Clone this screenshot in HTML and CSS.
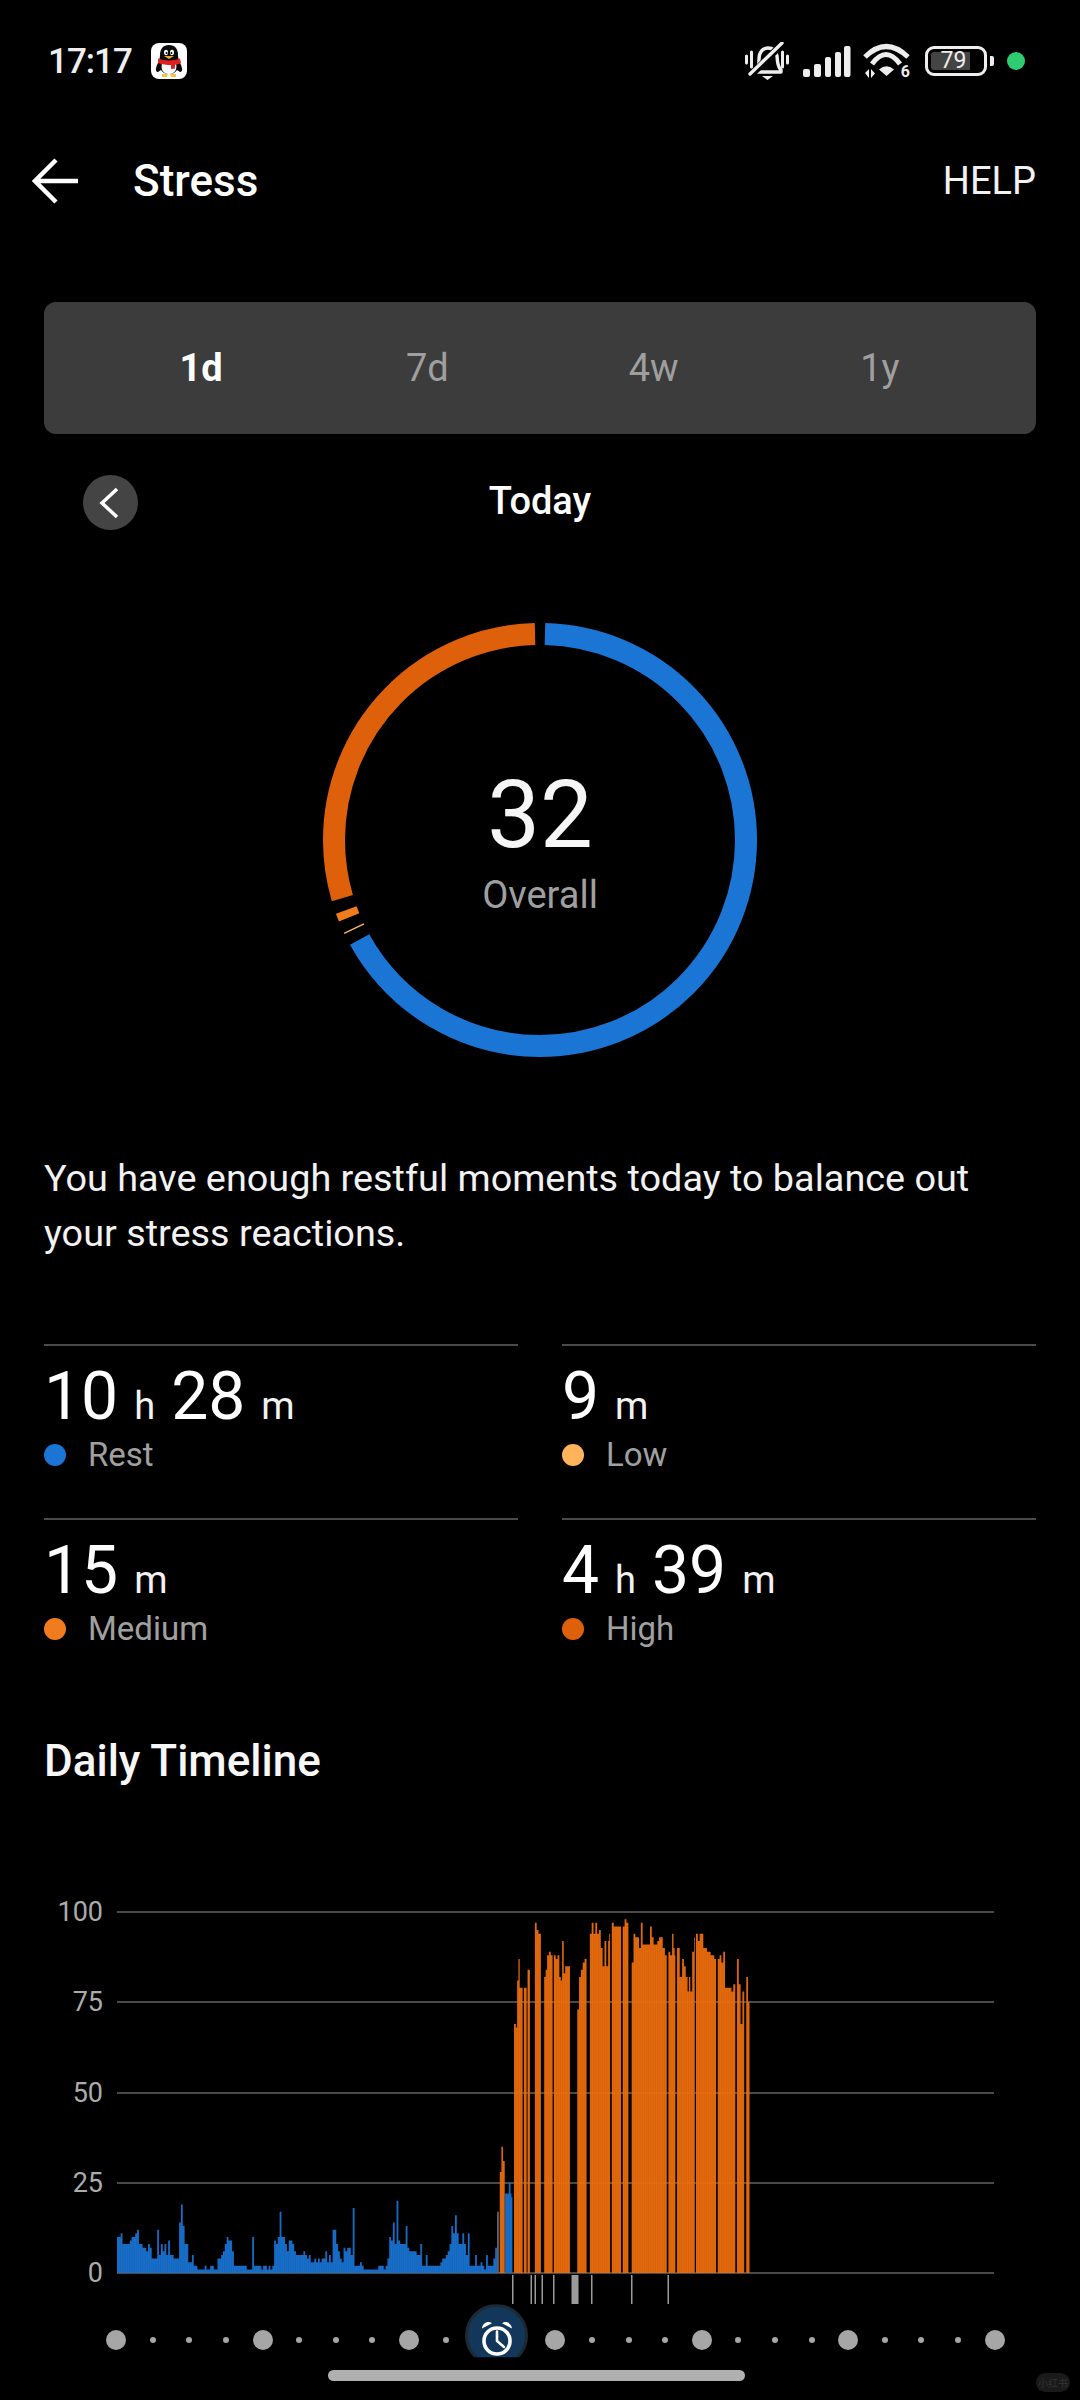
FILE: index.html
```html
<!DOCTYPE html>
<html lang="en">
<head>
<meta charset="utf-8">
<title>Stress</title>
<link rel="stylesheet" href="styles.css">
</head>
<body>
<div class="screen">
  <div class="status">
    <div class="status-left">
      <span class="clock">17:17</span>
      <svg class="qq" viewBox="0 0 36 36">
        <rect width="36" height="36" rx="8" fill="#fff"/>
        <path d="M18 2c-6 0-9 4-9 10 0 3-1 6-3 10-2 5-1 7 1 7l3-2c2 3 5 4 8 4s6-1 8-4l3 2c2 0 3-2 1-7-2-4-3-7-3-10 0-6-3-10-9-10z" fill="#0a0a0a"/>
        <path d="M11.500 19c-2 5-1 12 6.500 12s8.500-7 6.500-12z" fill="#fff"/>
        <ellipse cx="15" cy="9.500" rx="2" ry="2.800" fill="#fff"/>
        <ellipse cx="21" cy="9.500" rx="2" ry="2.800" fill="#fff"/>
        <circle cx="15.500" cy="10" r="1" fill="#000"/>
        <circle cx="20.500" cy="10" r="1" fill="#000"/>
        <path d="M13 13h10l-5 3z" fill="#f5a623"/>
        <path d="M7 15.500c6 2.500 16 2.500 22 0l1 4.500c-2 1-4 1.500-6 1.700v3.800l-4 .5v-4c-4 0-9-.5-13-2z" fill="#e02020"/>
        <path d="M11 31h6l-1 3h-5zM19 31h6v3h-5z" fill="#f5c542"/>
      </svg>
    </div>
    <div class="status-right">
      <svg class="ic-bell" viewBox="0 0 44 38" fill="none" stroke="#eee" stroke-linecap="round" stroke-linejoin="round">
        <path d="M1.500 14v7M6.500 10v15M37.500 10v15M42.500 14v7" stroke-width="3"/>
        <path d="M12 28c2-3 2-6 2-11 0-7 4-11 9-11 5 0 8 3 9 8 .6 5 0 10 4 14v2H10z" stroke-width="3.400"/>
        <path d="M6 33 37 2" stroke="#000" stroke-width="7"/>
        <path d="M5 32 37 1" stroke-width="3.400"/>
        <path d="M17 34h11l-5.500 4z" fill="#eee" stroke="none"/>
      </svg>
      <svg class="ic-signal" viewBox="0 0 48 31" fill="#eee">
        <rect x="0" y="23" width="7" height="8" rx="2"/>
        <rect x="11" y="18" width="7" height="13" rx="2"/>
        <rect x="22" y="11" width="6" height="20" rx="2"/>
        <rect x="32" y="6" width="6" height="25" rx="2"/>
        <rect x="41" y="0" width="6.500" height="31" rx="2"/>
      </svg>
      <div class="wifi">
        <svg class="ic-wifi" viewBox="0 0 47 36" fill="none" stroke="#eee">
          <path d="M2 14Q23-7 45 14" stroke-width="5"/>
          <path d="M9 21Q23 2 37 21" stroke-width="5"/>
          <path d="M16 26.500Q23.500 20 31 26.500L23.500 33z" fill="#eee" stroke="none"/>
          <path d="M2 30l4-4v9zM8 26v9l4-4.500z" fill="#eee" stroke="none"/>
        </svg>
        <span class="wifi-six">6</span>
      </div>
      <div class="battery">
        <div class="battery-case"><span class="battery-level">79</span></div>
        <span class="battery-nub"></span>
      </div>
      <span class="green-dot"></span>
    </div>
  </div>

  <header class="topbar">
    <div class="topbar-left">
      <svg class="back" viewBox="0 0 46 46" fill="none" stroke="#fff" stroke-width="4.500">
        <path d="M3 23H46M24 2 3 23l21 21"/>
      </svg>
      <h1 class="title">Stress</h1>
    </div>
    <span class="help">HELP</span>
  </header>

  <nav class="tabs">
    <span class="tab tab-on">1d</span>
    <span class="tab">7d</span>
    <span class="tab">4w</span>
    <span class="tab">1y</span>
  </nav>

  <div class="dayrow">
    <span class="prev">
      <svg class="prev-ic" viewBox="0 0 20 32" fill="none" stroke="#fff" stroke-width="3.500"><path d="M18 2 3 16l15 14"/></svg>
    </span>
    <span class="day">Today</span>
  </div>

  <div class="ring">
    <svg class="ring-svg" viewBox="0 0 434 434" fill="none" stroke-width="22">
      <g transform="rotate(-90 217 217)">
        <circle cx="217" cy="217" r="206" pathLength="360" stroke="#1a75d5" stroke-dasharray="239.7 360" stroke-dashoffset="-1.4"/>
        <circle cx="217" cy="217" r="206" pathLength="360" stroke="#ffb45c" stroke-dasharray=".4 360" stroke-dashoffset="-244.3"/>
        <circle cx="217" cy="217" r="206" pathLength="360" stroke="#f07c1e" stroke-dasharray="2.2 360" stroke-dashoffset="-247.9"/>
        <circle cx="217" cy="217" r="206" pathLength="360" stroke="#de600a" stroke-dasharray="105 360" stroke-dashoffset="-253.6"/>
      </g>
    </svg>
    <div class="ring-text">
      <span class="score">32</span>
      <span class="score-label">Overall</span>
    </div>
  </div>

  <p class="summary">You have enough restful moments today to balance out your stress reactions.</p>

  <section class="stats">
    <div class="stat">
      <div class="value"><b>10</b><i>h</i><b>28</b><i>m</i></div>
      <div class="legend"><span class="dot dot-rest"></span>Rest</div>
    </div>
    <div class="stat">
      <div class="value"><b>9</b><i>m</i></div>
      <div class="legend"><span class="dot dot-low"></span>Low</div>
    </div>
    <div class="stat">
      <div class="value"><b>15</b><i>m</i></div>
      <div class="legend"><span class="dot dot-med"></span>Medium</div>
    </div>
    <div class="stat">
      <div class="value"><b>4</b><i>h</i><b>39</b><i>m</i></div>
      <div class="legend"><span class="dot dot-high"></span>High</div>
    </div>
  </section>

  <h2 class="section-title">Daily Timeline</h2>

  <section class="chart">
    <div class="row"><span class="ylab">100</span><span class="gridline"></span></div>
    <div class="row"><span class="ylab">75</span><span class="gridline"></span></div>
    <div class="row"><span class="ylab">50</span><span class="gridline"></span></div>
    <div class="row"><span class="ylab">25</span><span class="gridline"></span></div>
    <div class="row"><span class="ylab">0</span><span class="gridline"></span></div>

    <svg class="bars" viewBox="0 0 480 100" preserveAspectRatio="none">
      <defs>
        <pattern id="stripe-blue" patternUnits="userSpaceOnUse" width="1" height="100">
          <rect width="1" height="100" fill="#1a75d5"/>
          <rect x=".8" width=".2" height="100" fill="#1460b4"/>
        </pattern>
        <pattern id="stripe-orange" patternUnits="userSpaceOnUse" width="1" height="100">
          <rect width="1" height="100" fill="#f2700c"/>
          <rect x=".8" width=".2" height="100" fill="#cc5f10"/>
        </pattern>
      </defs>
      <g transform="translate(0 100) scale(1 -1)">
        <path fill="url(#stripe-blue)" d="M0 0V10h2V11h1V8h4V9h1V10h2V11h1V12h1V8h2V7h2V6h1V8h1V7h1V4h1V4h2V12h1V5h1V8h1V6h1V8h1V5h1V9h1V5h1V5h1V4h3V14h1V19h1V13h1V8h2V3h1V3h1V5h1V2h2V1h4V2h1V1h1V1h1V2h2V1h2V4h2V5h1V6h1V8h1V10h1V9h2V6h1V2h6V2h1V1h3V10h1V2h4V1h1V2h2V1h1V2h1V1h1V2h1V9h1V8h1V10h1V17h1V10h2V8h1V6h1V9h2V8h1V6h1V5h2V5h2V6h1V5h1V4h1V5h1V3h2V4h1V3h1V4h1V3h1V4h2V6h1V3h1V5h1V3h1V12h2V8h1V6h1V4h1V3h1V7h1V6h1V7h2V5h1V18h1V2h3V3h1V2h1V1h5V1h3V2h3V1h1V2h1V4h1V10h1V9h1V14h1V8h1V20h1V9h1V8h3V13h1V7h1V6h4V5h2V8h1V2h2V5h1V2h7V3h1V4h2V5h1V6h1V8h1V13h1V11h1V16h1V11h1V8h2V11h1V8h1V5h1V11h1V2h3V5h1V2h2V3h1V2h1V1h1V5h1V2h3V4h1V7h1V0z"/>
        <path fill="#5f6b80" d="M208 0V17h1V0z"/>
        <path fill="url(#stripe-orange)" d="M209.500 0V28h.9V35h.9V31h.9V0z"/>
        <path fill="url(#stripe-blue)" d="M212.400 0V22h2V25h1V22h.5V21h.5V0z"/>
        <path fill="url(#stripe-orange)" d="M217.300 0V69h1V68h.7V81h.7V87h.7V79h1.600V0h.7V79h1.500V0h.5V84h1.300V0h2.700V97h1V95h1V94h1.300V0h1.800V82h.8V84h.8V88h1V89h1V88h1V0h.7V88h1V87h1V88h1V82h.8V81h.7V92h.9V83h.8V85h2.600V0h4V73h1V82h1V84h1V86h1V87h1.100V0h1.800V94h1V97h1V94h1V97h1V94h1V95h1V90h1V85h1V92h1V85h1V92h.6V94h.5V0h.9V97h1.100V96h4V0h.9V96h1V98h1V97h1.100V0h1.800V86h1V94h1V93h2V90h1V97h1V91h4V96h1V93h1V91h2V92h1V93h2V90h1.200V88h1V0h.9V89h1V88h1V94h.8V90h.6V88h.4V0h.9V90h1.500V82h1.300V87h1V85h1V82h1V78h.7V82h.8V78h1V89h1V93h.4V0h.7V94h1V92h1V94h2V90h2V89h2V88h2V87h1V0h.9V87h1V88h1V86h1V89h1V79h3.500V78h1V80h1.100V0h.9V87h1V80h1V69h1V78h1V0h1.100V82h1V75h.8V0z"/>
      </g>
    </svg>

    <svg class="ticks" viewBox="0 0 877 29" fill="#9a9a9a">
      <rect x="395" width="1.500" height="29"/>
      <rect x="413.500" width="1.500" height="29"/>
      <rect x="417.500" width="1.500" height="29"/>
      <rect x="424.500" width="1.500" height="29"/>
      <rect x="436" width="1.500" height="29"/>
      <rect x="454.500" width="7" height="29"/>
      <rect x="474" width="1.500" height="29"/>
      <rect x="514" width="1.500" height="29"/>
      <rect x="550.500" width="1.500" height="29"/>
    </svg>
  </section>

  <section class="hours">
    <span class="big"></span><span class="small"></span><span class="small"></span><span class="small"></span>
    <span class="big"></span><span class="small"></span><span class="small"></span><span class="small"></span>
    <span class="big"></span><span class="small"></span><span class="small"></span><span class="small"></span>
    <span class="big"></span><span class="small"></span><span class="small"></span><span class="small"></span>
    <span class="big"></span><span class="small"></span><span class="small"></span><span class="small"></span>
    <span class="big"></span><span class="small"></span><span class="small"></span><span class="small"></span>
    <span class="big"></span>
    <span class="alarm">
      <svg class="alarm-ic" viewBox="0 0 32 36" fill="none" stroke="#fff">
        <circle cx="16" cy="21" r="13" stroke-width="3.600"/>
        <path d="M16 11.500V21l7 6" stroke-width="2.600" stroke-linecap="round"/>
        <path d="M1 8.500C1.500 3 7 .5 11 3.200zM31 8.500C30.500 3 25 .5 21 3.200z" fill="#fff" stroke="none"/>
      </svg>
    </span>
  </section>

  <span class="home"></span>
  <span class="mark">小红书</span>
</div>
</body>
</html>
```

FILE: styles.css
```css
* { box-sizing: border-box; }
html, body { margin: 0; padding: 0; background: #000; }
body { font-family: Roboto, "Noto Sans", sans-serif; color: #fff; }
.screen { position: relative; width: 1080px; height: 2400px; overflow: hidden; background: #000; }

.status { display: flex; justify-content: space-between; align-items: center; height: 122px; padding: 0 55px 0 48px; }
.status-left { display: flex; align-items: center; gap: 19px; }
.clock { font-size: 35px; letter-spacing: -1px; font-weight: 500; color: #eee; }
.qq { width: 36px; height: 36px; display: block; }
.status-right { display: flex; align-items: center; }
.ic-bell { width: 44px; height: 38px; display: block; margin-right: 14px; }
.ic-signal { width: 48px; height: 31px; display: block; margin-right: 12px; }
.wifi { position: relative; width: 47px; height: 36px; margin-right: 15px; }
.ic-wifi { width: 47px; height: 36px; display: block; }
.wifi-six { position: absolute; right: 0; bottom: -1px; font-size: 16px; line-height: 16px; font-weight: 700; color: #eee; }
.battery { display: flex; align-items: center; gap: 3px; margin-right: 13px; }
.battery-case { width: 62px; height: 30px; border: 3px solid #eee; border-radius: 9px; padding: 3px; display: flex; }
.battery-level { display: block; width: 39px; background: #444; border-radius: 3px 0 0 3px; font-size: 23px; line-height: 18px; font-weight: 400; color: #eee; text-align: center; padding-left: 6px; }
.battery-nub { display: block; width: 4px; height: 10px; background: #eee; border-radius: 0 2px 2px 0; }
.green-dot { display: block; width: 18px; height: 18px; border-radius: 50%; background: #2ecc71; }

.topbar { display: flex; justify-content: space-between; align-items: center; height: 118px; padding: 0 44px 0 32px; }
.topbar-left { display: flex; align-items: center; gap: 55px; }
.back { width: 46px; height: 46px; display: block; }
.title { margin: 0; font-size: 44px; line-height: 50px; font-weight: 500; }
.help { font-size: 38px; font-weight: 400; color: #f2f2f2; }

.tabs { display: grid; grid-template-columns: repeat(4, 1fr); align-items: center; height: 132px; margin: 62px 44px 0; padding: 0 43px 0 44px; background: #3c3c3c; border-radius: 12px; }
.tab { text-align: center; font-size: 38px; color: #9f9f9f; }
.tab-on { color: #fff; font-weight: 700; }

.dayrow { display: grid; grid-template-columns: 1fr auto 1fr; align-items: center; margin: 41px 83px 0; height: 55px; }
.prev { display: flex; align-items: center; justify-content: center; width: 55px; height: 55px; border-radius: 50%; background: #444; grid-column: 1; grid-row: 1; }
.prev-ic { width: 20px; height: 32px; display: block; margin-right: 3px; }
.day { grid-column: 2; grid-row: 1; font-size: 38px; line-height: 50px; font-weight: 500; margin-bottom: 3px; }

.ring { position: relative; width: 434px; height: 434px; margin: 93px auto 0; }
.ring-svg { width: 434px; height: 434px; display: block; }
.ring-text { position: absolute; inset: 0; display: flex; flex-direction: column; align-items: center; justify-content: center; padding-top: 8px; }
.score { font-size: 94px; line-height: 88px; color: #f5f5f5; }
.score-label { font-size: 38px; line-height: 44px; margin-top: 14px; color: #9f9f9f; }

.summary { margin: 94px 44px 0; font-size: 37.8px; line-height: 55px; color: #f2f2f2; }

.stats { display: grid; grid-template-columns: 474px 474px; column-gap: 44px; margin: 83px 44px 0; }
.stat { height: 174px; border-top: 2px solid #4a4a4a; }
.value { display: flex; align-items: baseline; gap: 16px; height: 72px; line-height: 72px; margin-top: 15px; }
.value b { font-size: 66px; font-weight: 400; color: #fff; }
.value i { font-size: 38px; font-style: normal; color: #f2f2f2; }
.legend { display: flex; align-items: center; gap: 22px; margin-top: 2px; font-size: 33px; line-height: 40px; color: #a0a0a0; }
.dot { display: block; width: 22px; height: 22px; border-radius: 50%; }
.dot-rest { background: #1a75d5; }
.dot-low { background: #ffb45c; }
.dot-med { background: #f07c1e; }
.dot-high { background: #de600a; }

.section-title { margin: 43px 44px 0; font-size: 44px; line-height: 52px; font-weight: 500; color: #f7f7f7; }

.chart { position: relative; margin: 80px 0 0 44px; width: 950px; }
.row { display: grid; grid-template-columns: 59px 877px; column-gap: 14px; align-items: center; height: 90.25px; }
.ylab { text-align: right; font-size: 27px; color: #ababab; }
.gridline { display: block; height: 2px; background: #4a4a4a; }
.bars { position: absolute; left: 73px; top: 45px; width: 877px; height: 361px; display: block; opacity: .95; }
.ticks { position: absolute; left: 73px; top: 408px; width: 877px; height: 29px; display: block; }

.hours { position: relative; display: grid; grid-template-columns: repeat(25, 36.6px); align-items: center; justify-items: center; height: 20px; margin: 12px 0 0 98px; }
.big { display: block; width: 20px; height: 20px; border-radius: 50%; background: #a6a6a6; }
.small { display: block; width: 6px; height: 6px; border-radius: 50%; background: #a6a6a6; }
.alarm { position: absolute; left: 367px; top: -26px; width: 63px; height: 63px; border-radius: 50%; background: #12375a; border: 3px solid #1e2a33; clip-path: inset(0 0 10px 0); }
.alarm-ic { position: absolute; left: 13px; top: 13px; width: 32px; height: 36px; display: block; }

.home { position: absolute; left: 328px; top: 2370px; width: 417px; height: 11px; border-radius: 6px; background: #b0b0b0; }
.mark { position: absolute; left: 1036px; top: 2373px; width: 34px; height: 19px; border-radius: 10px; background: #1a1a1a; color: #333; font-family: "Noto Sans CJK SC", sans-serif; font-size: 10px; line-height: 19px; text-align: center; }
```
